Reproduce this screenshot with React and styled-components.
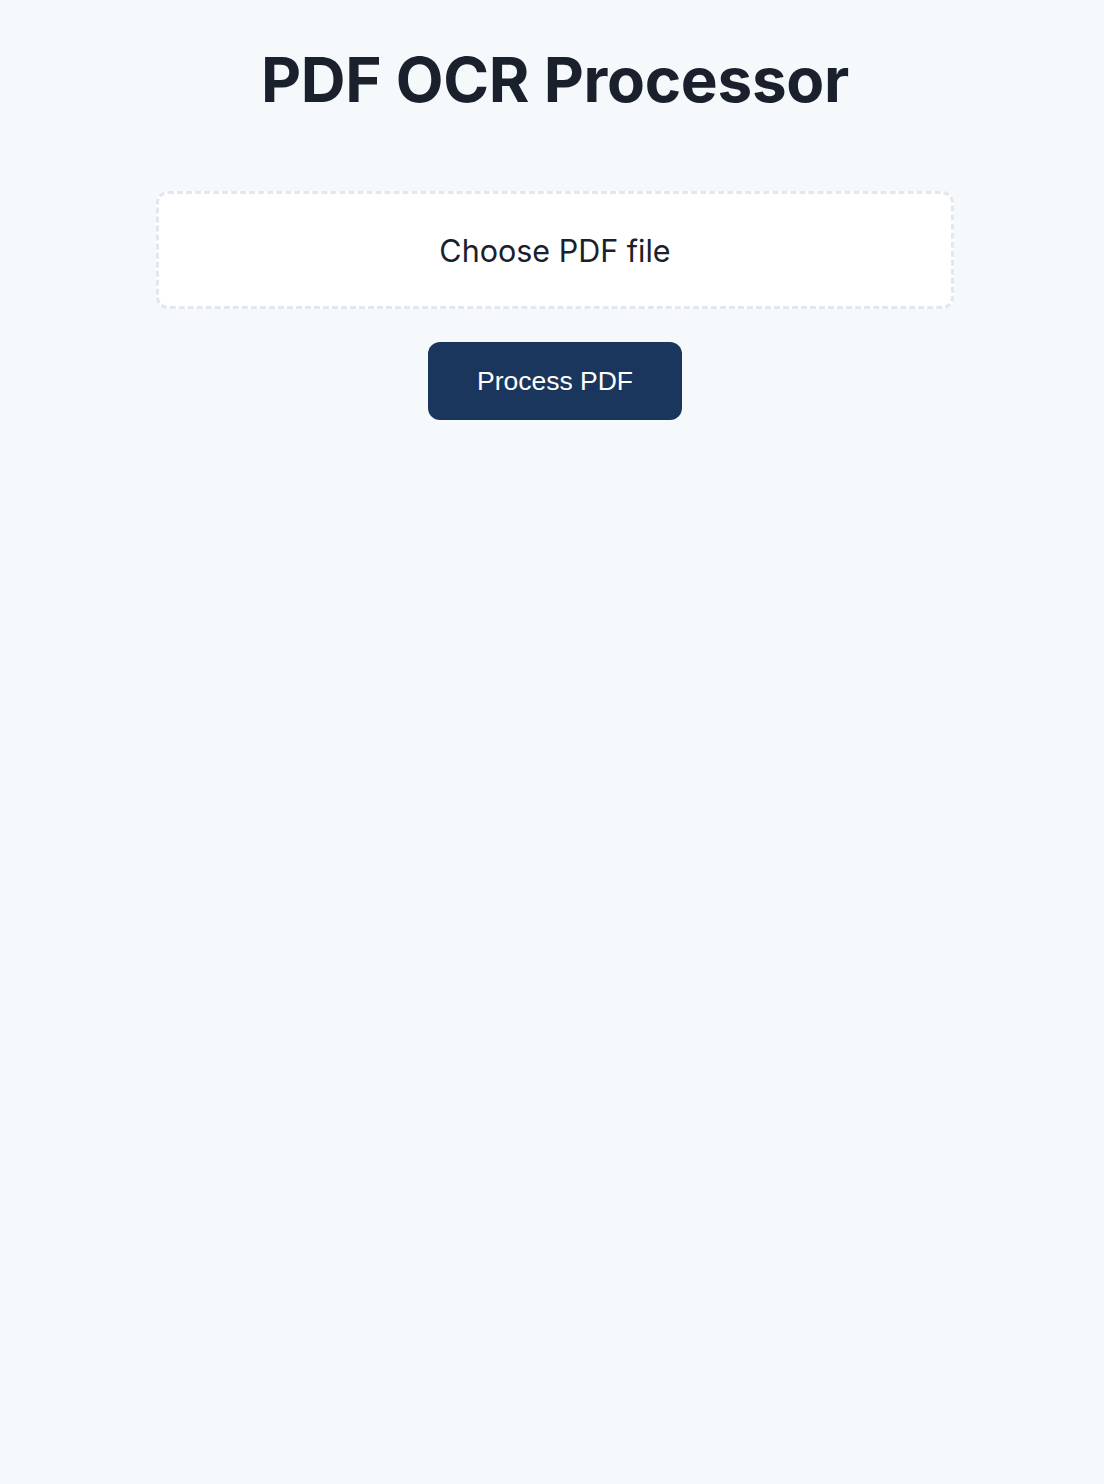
import React from 'react'
import styled, { createGlobalStyle } from 'styled-components'

const GlobalStyle = createGlobalStyle`
    html, body {
        margin: 0;
        padding: 0;
        background: #f5f9fc;
    }
    body {
        font-family: Inter, "Liberation Sans", sans-serif;
        color: #1a202c;
    }
`;

const Page = styled.div`
    min-height: 1484px;
    padding: 0 0 0 6px;
    box-sizing: border-box;
    display: flex;
    flex-direction: column;
    align-items: center;
`;

const Title = styled.h1`
    margin: 40px 0 0;
    font-size: 62px;
    font-weight: 700;
    line-height: 80px;
    letter-spacing: -0.3px;
    color: #1a202c;
`;

const DropZone = styled.label`
    margin-top: 71px;
    width: 798px;
    height: 118px;
    box-sizing: border-box;
    border: 3px dashed #e2e8f0;
    border-radius: 12px;
    background: #ffffff;
    display: flex;
    align-items: center;
    justify-content: center;
    font-size: 30.5px;
    color: #1a202c;
    cursor: pointer;
    input {
        display: none;
    }
`;

const Button = styled.button`
    margin-top: 33px;
    width: 254px;
    height: 78px;
    border: none;
    border-radius: 12px;
    background: #1a365d;
    color: #ffffff;
    font-family: "Liberation Sans", Arial, sans-serif;
    font-size: 26.5px;
    cursor: pointer;
`;

const App = () => {
    return (
        <Page>
            <GlobalStyle />
            <Title>PDF OCR Processor</Title>
            <DropZone>
                <input type="file" accept="application/pdf" />
                Choose PDF file
            </DropZone>
            <Button>Process PDF</Button>
        </Page>
    )
}

export default App
